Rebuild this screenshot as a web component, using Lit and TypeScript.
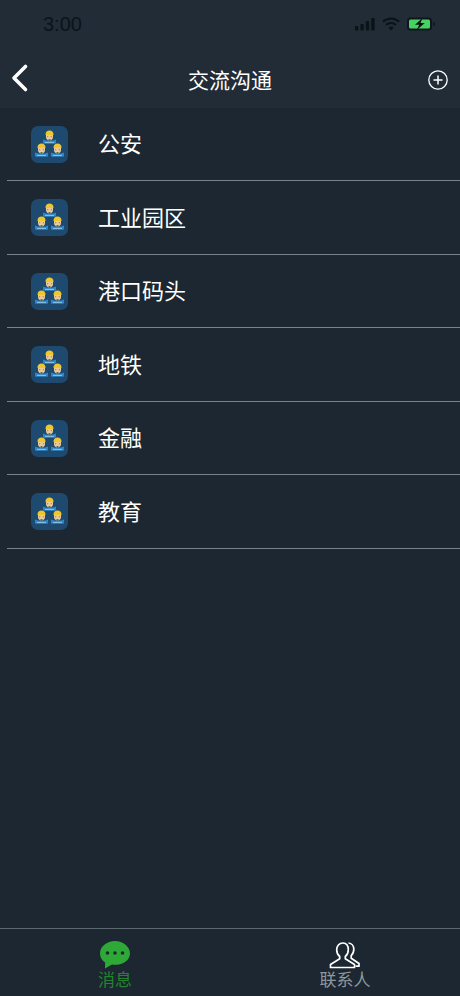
import { LitElement, html, css, svg } from "lit";
import { customElement } from "lit/decorators.js";

const ROWS = ["公安", "工业园区", "港口码头", "地铁", "金融", "教育"];

const worker = (x: number, y: number) => svg`
  <g transform="translate(${x} ${y})">
    <path d="M-6.500 9c2 .8 3.500 1.200 6.500 1.200S4.500 9.800 6.500 9v3.200c0 .6-.4 1-1 1h-11c-.6 0-1-.4-1-1z" fill="#2f86c8"/>
    <rect x="-4.500" y="11.400" width="9" height="0.800" fill="#a9d6f0"/>
    <path d="M-3.500 3h7v3.600c0 2-1.600 3.400-3.500 3.400s-3.500-1.400-3.500-3.400z" fill="#eccb9a"/>
    <path d="M-4 3.900C-4 1.500-2.200 0 0 0s4 1.500 4 3.900c0 .4-.3.600-.7.600h-6.600c-.4 0-.7-.2-.7-.6z" fill="#eec72e"/>
    <rect x="-2.200" y="5.800" width="0.900" height="0.900" fill="#6a5a44"/>
    <rect x="1.300" y="5.800" width="0.900" height="0.900" fill="#6a5a44"/>
    <path d="M-1.300 8.800L0 10.300l1.300-1.500z" fill="#33424f"/>
  </g>`;

@customElement("app-root")
export class AppRoot extends LitElement {
  static styles = css`
    :host {
      display: flex;
      flex-direction: column;
      width: 460px;
      height: 996px;
      background: #1c2731;
      color: #fff;
      font-family: "Noto Sans CJK SC", "Liberation Sans", sans-serif;
      overflow: hidden;
    }
    .top {
      height: 107.5px;
      background: #212c37;
      flex: none;
      display: flex;
      flex-direction: column;
    }
    .status {
      height: 48px;
      display: flex;
      align-items: center;
      justify-content: space-between;
      padding: 0 25px 0 43px;
      flex: none;
    }
    .time {
      font-family: "Liberation Sans", sans-serif;
      font-size: 20px;
      color: #0c131a;
    }
    .sys {
      display: flex;
      align-items: center;
      gap: 7px;
    }
    .nav {
      flex: 1;
      display: flex;
      align-items: center;
      justify-content: space-between;
      padding: 0 12px 0 11px;
      position: relative;
    }
    .title {
      position: absolute;
      left: 0;
      right: 0;
      text-align: center;
      font-size: 21px;
      line-height: 28px;
      top: 17px;
    }
    .nav svg {
      display: block;
    }
    .back {
      margin-top: 1px;
    }
    .plus {
      margin-top: 5px;
    }
    .list {
      flex: 1;
    }
    .row {
      height: 73.5px;
      box-sizing: border-box;
      display: flex;
      align-items: center;
      margin-left: 7px;
      padding: 0 0 0 24px;
      gap: 30px;
      border-bottom: 1px solid #79828a;
      font-size: 22px;
    }
    .row span {
      margin-bottom: 3px;
    }
    .icon {
      width: 37px;
      height: 37px;
      display: block;
      flex: none;
      margin-top: 1px;
    }
    .tabs {
      flex: none;
      height: 68px;
      box-sizing: border-box;
      border-top: 1px solid #5c666e;
      display: grid;
      grid-template-columns: 1fr 1fr;
    }
    .tab {
      display: flex;
      flex-direction: column;
      align-items: center;
      padding-top: 11px;
      font-size: 17px;
      line-height: 20px;
      color: #8f979d;
    }
    .tab svg {
      display: block;
      flex: none;
    }
    .tab.on {
      color: #23842e;
    }
  `;

  render() {
    return html`
      <div class="top">
        <div class="status">
          <span class="time">3:00</span>
          <span class="sys">
            <svg width="20" height="14" viewBox="0 0 20 14" fill="#0b1218">
              <rect x="0" y="9" width="3.400" height="4.500" rx="0.800" />
              <rect x="5.400" y="7" width="3.400" height="6.500" rx="0.800" />
              <rect x="10.800" y="4" width="3.400" height="9.500" rx="0.800" />
              <rect x="16.200" y="1" width="3.400" height="12.500" rx="0.800" />
            </svg>
            <svg width="18" height="14" viewBox="0 0 18 14" fill="none" stroke="#0b1218" stroke-width="2">
              <path d="M1 4.800a11.500 11.500 0 0 1 16 0" />
              <path d="M4 8a7.200 7.200 0 0 1 10 0" />
              <path d="M9 13.600l-2.600-2.900a3.800 3.800 0 0 1 5.200 0z" fill="#0b1218" stroke="none" />
            </svg>
            <svg width="28" height="14" viewBox="0 0 28 14">
              <rect x="0" y="0.500" width="25" height="13" rx="3.500" fill="#0f171e" />
              <rect x="2" y="2.500" width="21" height="9" rx="1.500" fill="#46d160" />
              <path d="M15.500 1l-7.500 6.700h4.200l-2.400 5.300 8-7h-4.300z" fill="#0b1218" />
              <rect x="26" y="5" width="1.600" height="4" rx="0.800" fill="#0f171e" />
            </svg>
          </span>
        </div>
        <div class="nav">
          <svg class="back" width="18" height="30" viewBox="0 0 18 30" fill="none" stroke="#fff" stroke-width="3.600" stroke-linecap="round" stroke-linejoin="round">
            <path d="M14.500 3.500L3 15 14.500 26.500" />
          </svg>
          <span class="title">交流沟通</span>
          <svg class="plus" width="20" height="20" viewBox="0 0 20 20" fill="none" stroke="#fff" stroke-width="1.300">
            <circle cx="10" cy="10" r="9.200" />
            <path d="M5.500 10h9M10 5.500v9" stroke-width="1.500" />
          </svg>
        </div>
      </div>
      <div class="list">
        ${ROWS.map(
          (t) => html`
            <div class="row">
              <svg class="icon" viewBox="0 0 37 37">
                <rect width="37" height="37" rx="7" fill="#1d4a6e" />
                ${worker(18.5, 4.5)} ${worker(10.5, 17.5)} ${worker(26.5, 17.5)}
              </svg>
              <span>${t}</span>
            </div>
          `
        )}
      </div>
      <div class="tabs">
        <div class="tab on">
          <svg width="32" height="29" viewBox="0 0 32 29">
            <path d="M16 1C7.700 1 1 6.600 1 13.400c0 3.700 2 7 5.100 9.200L6 28.500l7-4c1 .2 2 .3 3 .3 8.300 0 15-5 15-11.400S24.300 1 16 1z" fill="#2ea836" />
            <circle cx="8.500" cy="13" r="1.800" fill="#1c2731" />
            <circle cx="16" cy="13" r="1.800" fill="#1c2731" />
            <circle cx="23.500" cy="13" r="1.800" fill="#1c2731" />
          </svg>
          <span>消息</span>
        </div>
        <div class="tab">
          <svg width="32" height="29" viewBox="0 0 32 29" fill="none" stroke="#fff" stroke-width="1.700" stroke-linejoin="round">
            <path d="M14 3c-4 0-6.300 3-6.300 6.800 0 2.800 1.200 5.300 3 6.700v2.200L1.500 24.500v3h24v-3l-9.200-5.800v-2.200c1.800-1.400 3-3.900 3-6.700C19.300 6 18 3 14 3z" />
            <path d="M19.500 3c3.200.3 5.300 3 5.300 6.300 0 2.600-1 4.900-2.600 6.300v2.600l7.800 5.300v2.700h-3.500" />
          </svg>
          <span>联系人</span>
        </div>
      </div>
    `;
  }
}
